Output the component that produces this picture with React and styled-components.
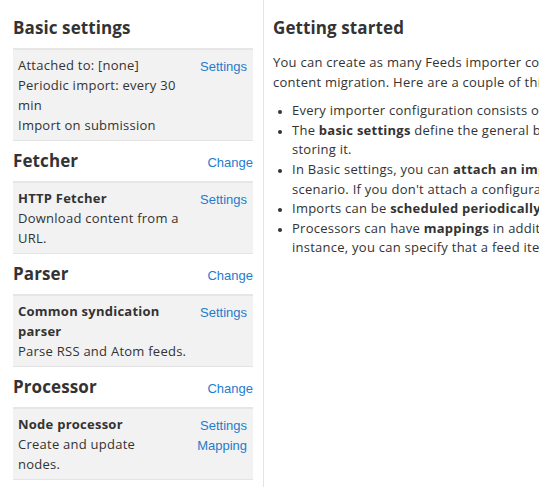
import styled, { createGlobalStyle } from "styled-components";

const GlobalStyle = createGlobalStyle`
  html, body {
    margin: 0;
    padding: 0;
    background: #fff;
    overflow: hidden;
  }
  body {
    font-family: "Open Sans", "DejaVu Sans", sans-serif;
    font-size: 13px;
    line-height: 20px;
    letter-spacing: 0.25px;
    color: #333;
  }
`;

const Page = styled.div`
  display: flex;
  height: 487px;
  width: 539px;
  overflow: hidden;
`;

// LEFT COLUMN
const Sidebar = styled.div`
  flex: 0 0 240px;
  padding: 8px 10px 0 13px;
  border-right: 1px solid #e4e4e4;
`;
const SectionHeader = styled.div`
  display: flex;
  justify-content: space-between;
  align-items: baseline;
  height: 40px;
  line-height: 40px;
`;
const SectionTitle = styled.h2`
  margin: 0;
  font-size: 17px;
  font-weight: 700;
  letter-spacing: 0.1px;
  color: #333;
`;
const Link = styled.a`
  font-family: "Liberation Sans", Arial, sans-serif;
  font-size: 13px;
  letter-spacing: 0;
  color: #1f7ccc;
  text-decoration: none;
  cursor: pointer;
`;
const Panel = styled.div`
  display: flex;
  justify-content: space-between;
  background: #f2f2f2;
  border-top: 2px solid #e6e6e6;
  border-bottom: 1px solid #e4e4e4;
  padding: 5px 6px 5px 5px;
`;
const PanelBody = styled.div`
  width: ${(p) => p.$width || "172px"};
`;
const PanelTitle = styled.div`
  font-weight: 700;
`;
const PanelLinks = styled.div`
  display: flex;
  flex-direction: column;
  align-items: flex-end;
  line-height: 20px;
  padding-top: 2px;
`;

// RIGHT COLUMN
const Main = styled.div`
  flex: 1 0 auto;
  padding: 8px 0 0 9px;
  line-height: 19.6px;
`;
const MainTitle = styled.h2`
  margin: 0;
  height: 40px;
  line-height: 40px;
  font-size: 17px;
  font-weight: 700;
  letter-spacing: 0.1px;
`;
const Para = styled.p`
  margin: 5px 0 0;
  white-space: nowrap;
`;
const List = styled.ul`
  margin: 9px 0 0;
  padding: 0 0 0 19px;
  white-space: nowrap;
  li::marker {
    font-size: 10px;
  }
`;

const Section = ({ title, change, children }) => (
  <>
    <SectionHeader>
      <SectionTitle>{title}</SectionTitle>
      {change && <Link>Change</Link>}
    </SectionHeader>
    {children}
  </>
);

const App = () => {
  return (
    <Page>
      <GlobalStyle />
      <Sidebar>
        <Section title="Basic settings">
          <Panel>
            <PanelBody $width="178px">
              Attached to: [none]
              <br />
              Periodic import: every 30 min
              <br />
              Import on submission
            </PanelBody>
            <PanelLinks>
              <Link>Settings</Link>
            </PanelLinks>
          </Panel>
        </Section>
        <Section title="Fetcher" change>
          <Panel>
            <PanelBody>
              <PanelTitle>HTTP Fetcher</PanelTitle>
              Download content from a URL.
            </PanelBody>
            <PanelLinks>
              <Link>Settings</Link>
            </PanelLinks>
          </Panel>
        </Section>
        <Section title="Parser" change>
          <Panel>
            <PanelBody>
              <PanelTitle>Common syndication parser</PanelTitle>
              Parse RSS and Atom feeds.
            </PanelBody>
            <PanelLinks>
              <Link>Settings</Link>
            </PanelLinks>
          </Panel>
        </Section>
        <Section title="Processor" change>
          <Panel>
            <PanelBody $width="150px">
              <PanelTitle>Node processor</PanelTitle>
              Create and update nodes.
            </PanelBody>
            <PanelLinks>
              <Link>Settings</Link>
              <Link>Mapping</Link>
            </PanelLinks>
          </Panel>
        </Section>
      </Sidebar>
      <Main>
        <MainTitle>Getting started</MainTitle>
        <Para>
          You can create as many Feeds importer configurations as you would like to. Each can have a distinct purpose like letting your users aggregate RSS feeds or importing a CSV file for
          <br />
          content migration. Here are a couple of things that are important to understand in order to get started with Feeds:
        </Para>
        <List>
          <li>Every importer configuration consists of basic settings, a fetcher, a parser and a processor and their settings.</li>
          <li>
            The <strong>basic settings</strong> define the general behavior of the importer. <strong>Fetchers</strong> are responsible for loading data, <strong>parsers</strong> for organizing it and <strong>processors</strong> for "doing stuff" with it, usually
            <br />
            storing it.
          </li>
          <li>
            In Basic settings, you can <strong>attach an importer configuration to a content type</strong>. This is useful when many imports of a kind should be created, for example in an RSS aggregation
            <br />
            scenario. If you don't attach a configuration to a content type, you can use it on the import page.
          </li>
          <li>
            Imports can be <strong>scheduled periodically</strong> - see the periodic import select box in the Basic settings.
          </li>
          <li>
            Processors can have <strong>mappings</strong> in addition to settings. Mappings allow you to define what elements of a data feed should be mapped to what content fields on a granular level. For
            <br />
            instance, you can specify that a feed item's author should be mapped to a node's body.
          </li>
        </List>
      </Main>
    </Page>
  );
};

export default App;
